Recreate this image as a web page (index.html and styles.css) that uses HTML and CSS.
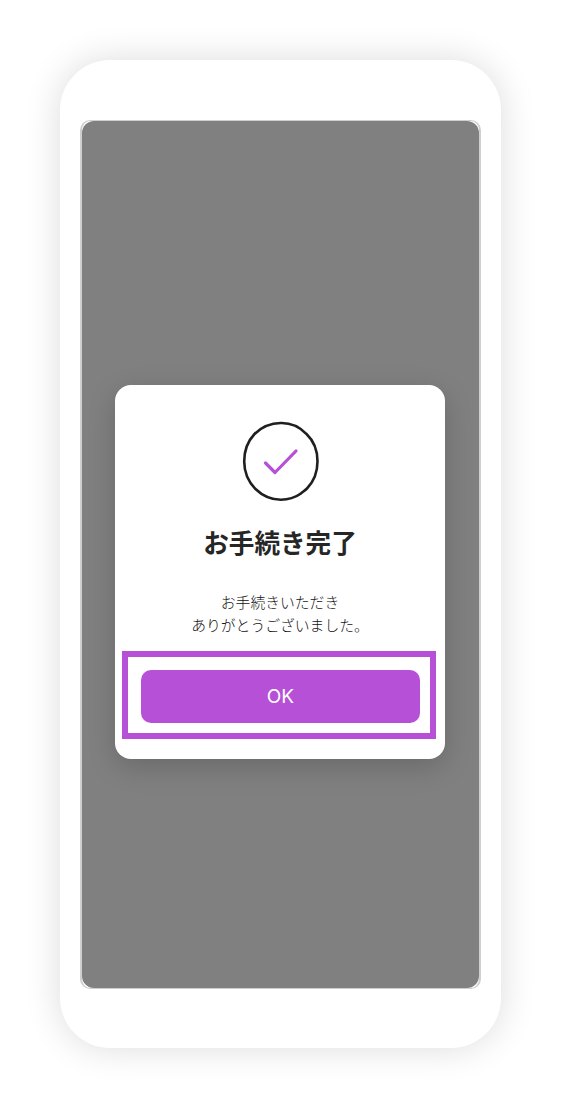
FILE: index.html
```html
<!DOCTYPE html>
<html lang="ja">
<head>
<meta charset="utf-8">
<title>お手続き完了</title>
<link rel="stylesheet" href="styles.css">
</head>
<body>
<div class="phone">
  <div class="screen">
    <div class="overlay">
      <div class="dialog">
        <svg class="check" width="78" height="82" viewBox="0 0 78 82" fill="none">
          <path class="ring" d="M38.800 3C48.500 2.800 57.500 6.800 64.300 13.800C71.300 20.500 75.500 30 75.500 41.200C75.500 52 71.700 61.500 65 68.500C62.500 71 60.500 71.800 58.500 73.800C53 77.800 46.500 79.700 38.800 79.700C29 79.700 20.500 75.800 13.500 69C6.500 62 2.200 52.500 2.200 41.300C2.200 30.500 6 21 12.500 14C19.500 7 28.800 3.200 38.800 3Z"/>
          <path class="tick" d="M23.500 43L33 52.500L54 31"/>
        </svg>
        <h1 class="title">お手続き完了</h1>
        <p class="message">お手続きいただき<br>ありがとうございました。</p>
        <div class="highlight">
          <button class="ok" type="button">OK</button>
        </div>
      </div>
    </div>
  </div>
</div>
</body>
</html>
```
FILE: styles.css
```css
* { box-sizing: border-box; }
html, body { margin: 0; height: 100%; background: #fff; overflow: hidden; }
body {
  padding: 60px 60px 61px 60px;
  font-family: Inter, "Noto Sans CJK JP", sans-serif;
}
.phone {
  width: 441px;
  height: 988px;
  padding: 60px 20px 59px 20px;
  background: #fff;
  border-radius: 50px;
  box-shadow: 0 0 36px rgba(0, 0, 0, 0.14);
}
.screen {
  height: 869px;
  border: 2px solid #cfcfcf;
  border-width: 1.500px 2px;
  border-radius: 10px;
  background: #fff;
}
.overlay {
  height: 100%;
  background: #808080;
  border-radius: 12px;
  display: flex;
  align-items: flex-start;
  justify-content: flex-start;
  padding: 263.500px 0 0 33px;
}
.dialog {
  flex: none;
  width: 330px;
  height: 374px;
  background: #fff;
  border-radius: 16px;
  box-shadow: 0 8px 28px rgba(0, 0, 0, 0.18);
  display: flex;
  flex-direction: column;
  align-items: center;
  padding-top: 35px;
}
.check { display: block; flex: none; margin-left: 2px; }
.ring { stroke: #1f1f1f; stroke-width: 2.600; stroke-linejoin: round; }
.tick { stroke: #b650d6; stroke-width: 3.200; stroke-linecap: round; stroke-linejoin: round; }
.title {
  margin: 22px 0 0;
  font-size: 25.600px;
  line-height: 36px;
  font-weight: 600;
  color: #262626;
  font-family: "Noto Sans CJK JP", sans-serif;
}
.message {
  margin: 30px 0 0;
  font-size: 14.800px;
  line-height: 23px;
  font-weight: 300;
  text-align: center;
  color: #111;
  font-family: "Noto Sans CJK JP", sans-serif;
}
.highlight {
  align-self: flex-start;
  width: 314px;
  height: 88px;
  margin: 15px 0 0 7px;
  border: 6px solid #b650d6;
  padding: 13px 10px 10px 13px;
  background: #fff;
}
.ok {
  display: block;
  width: 100%;
  height: 53px;
  border: 0;
  border-radius: 10px;
  background: #b650d6;
  color: #fff;
  font-family: Inter, sans-serif;
  font-size: 19px;
  font-weight: 400;
}
```
